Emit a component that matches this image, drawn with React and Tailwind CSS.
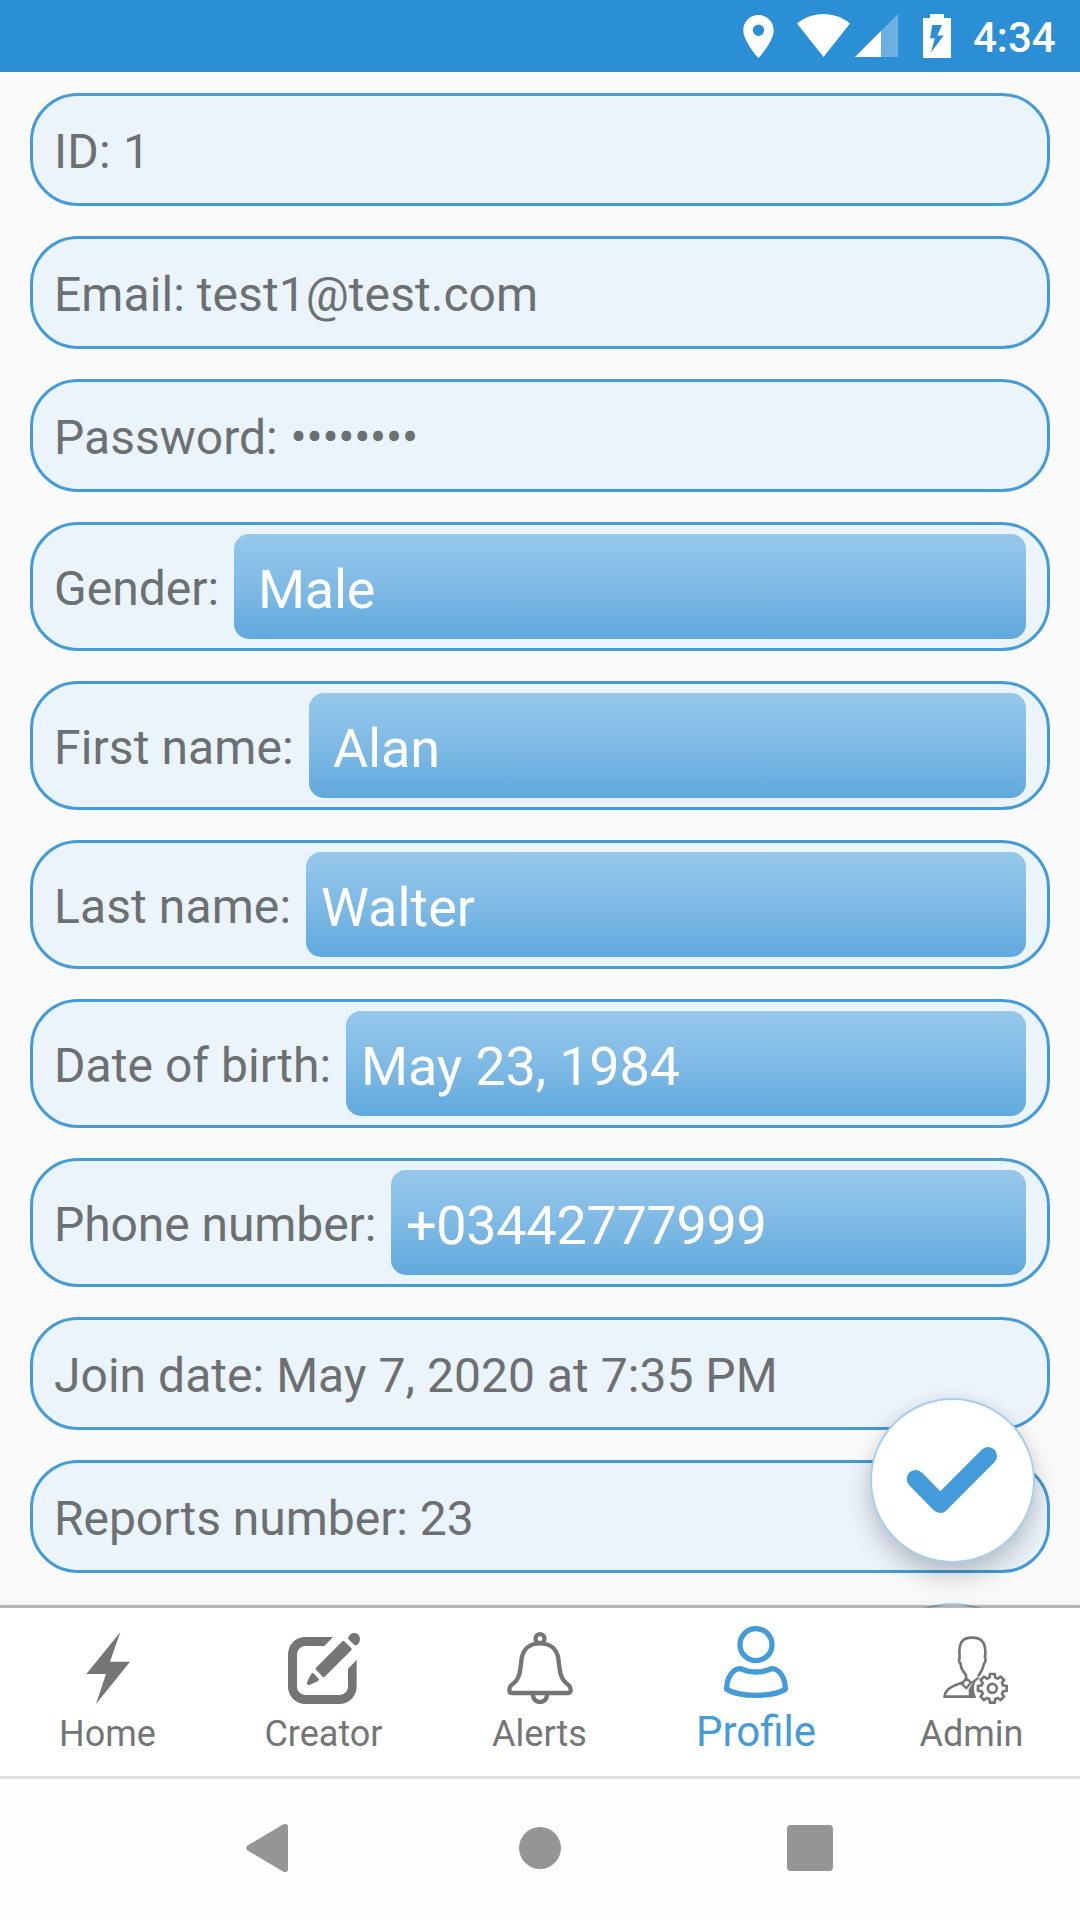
const ROWS = [
  { label: "ID: 1", tracking: "tracking-[0.2px]" },
  { label: "Email: test1@test.com", tracking: "tracking-[0.06px]" },
  { label: "Password: ", secret: "••••••••" },
  { label: "Gender:", value: "Male", labelWidth: "w-[165px]", indent: "pl-[24px]", valueTracking: "tracking-[-0.3px]" },
  { label: "First name:", value: "Alan", labelWidth: "w-[240px]", indent: "pl-[24px]", tracking: "tracking-[0.1px]", valueTracking: "tracking-[-0.2px]" },
  { label: "Last name:", value: "Walter", labelWidth: "w-[237px]", indent: "pl-[15px]", tracking: "tracking-[0.1px]" },
  { label: "Date of birth:", value: "May 23, 1984", labelWidth: "w-[277px]", indent: "pl-[15px]", tracking: "tracking-[0.05px]", valueTracking: "tracking-[-0.2px]" },
  { label: "Phone number:", value: "+03442777999", labelWidth: "w-[322px]", indent: "pl-[15px]", tracking: "tracking-[-0.08px]", valueTracking: "tracking-[-0.33px]" },
  { label: "Join date: May 7, 2020 at 7:35 PM", tracking: "tracking-[0.03px]" },
  { label: "Reports number: 23", tracking: "tracking-[-0.04px]" },
];

function StatusBar() {
  return (
    <header className="flex h-[72px] shrink-0 items-start bg-[#2b8fd5] pl-[743px] text-white">
      <svg className="mt-[15px] h-[43px] w-[31px]" viewBox="0 0 31 43" fill="currentColor">
        <path fillRule="evenodd" d="M15.500 0C7 0 .3 6.700.3 15.200c0 11.300 15.200 27.800 15.200 27.800s15.200-16.500 15.200-27.800C30.700 6.700 24 0 15.500 0zm0 20.900a5.700 5.700 0 1 1 0-11.400 5.700 5.700 0 0 1 0 11.400z" />
      </svg>
      <svg className="ml-[23px] mt-[14px] h-[43px] w-[53px]" viewBox="0 0 53 43" fill="currentColor">
        <path d="M0 9.500C7.500 3.500 16.500 0 26.500 0S45.500 3.500 53 9.500L26.500 43z" />
      </svg>
      <svg className="ml-[5px] mt-[14px] h-[43px] w-[43px]" viewBox="0 0 43 43" fill="currentColor">
        <path opacity=".3" d="M0 43L43 0V43z" />
        <path d="M0 43L26 17V43z" />
      </svg>
      <svg className="ml-[25px] mt-[14px] h-[44px] w-[28px]" viewBox="0 0 28 44" fill="currentColor">
        <path fillRule="evenodd" d="M7 0H21V4H28V44H0V4H7zM9.300 11L7 24.300h4.800L8 38.500 20.700 21.500H14.300L19 11z" />
      </svg>
      <span className="ml-[22px] mt-[13px] text-[42px] font-medium leading-[49px]">4:34</span>
    </header>
  );
}

function Row({ label, value, secret, labelWidth = "", indent = "", tracking = "", valueTracking = "" }) {
  return (
    <div
      className={
        "flex shrink-0 items-center rounded-[48px] border-[3px] border-[#439bda] bg-[#ebf3fb] px-[21px] " +
        (value ? "h-[129px]" : "h-[113px]")
      }
    >
      <span
        className={
          "shrink-0 whitespace-pre pt-[4px] text-[48px] leading-[56px] text-[#6d7072] " + tracking + " " + labelWidth
        }
      >
        {label}
        {secret && <span className="ml-px tracking-[-0.28px]">{secret}</span>}
      </span>
      {value && (
        <span
          className={
            "ml-[15px] flex h-[105px] flex-1 items-center rounded-[15px] bg-linear-to-b from-[#97c8eb] via-[#7fbae5] to-[#60a9de] pt-[7px] text-[54px] leading-[64px] text-white " +
            indent + " " + valueTracking
          }
        >
          {value}
        </span>
      )}
    </div>
  );
}

function HomeIcon() {
  return (
    <svg className="size-[72px]" viewBox="0 0 216 216" fill="currentColor">
      <path d="M145 0L114 89.500H174L72 216 102 126H43z" />
    </svg>
  );
}

function CreatorIcon() {
  return (
    <svg className="size-[72px]" viewBox="0 0 216 216" fill="currentColor">
      <path d="M135 15H52A52 52 0 0 0 0 67V164A52 52 0 0 0 52 216H154A52 52 0 0 0 206 164V84L180 110V164A25 25 0 0 1 155 189H52A25 25 0 0 1 27 164V67A25 25 0 0 1 52 42H109z" />
      <path d="M84 107L163 28Q166 25 169 28L190 49Q192 52 190 55L110 134Q107 137 104 134L84 113Q81 110 84 107z" />
      <path d="M75 122Q78 124 94 143Q92 147 64 159Q56 160 57 151Q68 124 75 122z" />
      <path d="M180 18C186 -3 216 -3 216 22C216 32 210 38 204 40Q200 41 197 37L180 20z" />
    </svg>
  );
}

function BellIcon() {
  return (
    <svg className="size-[72px]" viewBox="0 0 216 216" fill="none" stroke="currentColor" strokeWidth="13">
      <circle cx="108" cy="20" r="13.500" />
      <path d="M108 34C75 34 57 53 53 80C48 115 49 133 33 150C21 160 16 163 16 175Q16 183 24 183H192Q200 183 200 175C200 163 195 160 183 150C167 133 168 115 163 80C159 53 141 34 108 34z" />
      <path d="M87 186V189A21 21 0 0 0 129 189V186" />
    </svg>
  );
}

function ProfileIcon() {
  return (
    <svg className="size-[72px]" viewBox="0 0 216 216" fill="none" stroke="currentColor" strokeWidth="16" strokeLinejoin="round">
      <circle cx="108" cy="56" r="48" />
      <path d="M20 190C20 154 38 129 61 128C76 135 90 138 108 138C126 138 140 135 155 128C178 129 196 154 196 190C175 202 145 208 108 208C71 208 41 202 20 190z" />
    </svg>
  );
}

function AdminIcon() {
  return (
    <svg className="size-[72px]" viewBox="0 0 216 216" fill="none" stroke="currentColor" strokeWidth="8">
      <path d="M90 148V129C80 117 74 108 74 96Q69 92 69 82L71 78C67 35 76 17 108 17C140 17 152 35 147 78L149 84Q147 94 143 97C141 112 135 120 126 133" />
      <path d="M84 151C50 160 26 174 26 194H104" />
      <path d="M91 139L105 152 91 168 77 155z" strokeWidth="7" />
      <path d="M128 137L108 152" strokeWidth="7" />
      <path fill="currentColor" stroke="none" d="M116 144L98 172V198H121Q108 170 119 146z" />
      <g transform="translate(169 169)" strokeWidth="8">
        <circle r="13.500" strokeWidth="8" />
        <path d="M-7 -43H7L9 -32L16 -29L25 -35L35 -25L29 -16L32 -9L43 -7V7L32 9L29 16L35 25L25 35L16 29L9 32L7 43H-7L-9 32L-16 29L-25 35L-35 25L-29 16L-32 9L-43 7V-7L-32 -9L-29 -16L-35 -25L-25 -35L-16 -29L-9 -32z" />
      </g>
    </svg>
  );
}

const TABS = [
  { name: "Home", Icon: HomeIcon },
  { name: "Creator", Icon: CreatorIcon },
  { name: "Alerts", Icon: BellIcon },
  { name: "Profile", Icon: ProfileIcon, active: true },
  { name: "Admin", Icon: AdminIcon },
];

function TabBar() {
  return (
    <nav className="grid h-[171px] shrink-0 grid-cols-5 border-b-[3px] border-[#dedede] bg-white">
      {TABS.map(({ name, Icon, active }) => (
        <div
          key={name}
          className={"flex flex-col items-center " + (active ? "pt-[18px] text-[#439bda]" : "pt-[24px] text-[#757575]")}
        >
          <Icon />
          <span
            className={
              active ? "mt-[9px] text-[42px] leading-[49px]" : "mr-[1px] mt-[9px] text-[36px] leading-[42px]"
            }
          >
            {name}
          </span>
        </div>
      ))}
    </nav>
  );
}

function SystemNav() {
  return (
    <footer className="flex flex-1 items-center justify-between bg-[#fefefe] pb-[3px] pl-[246px] pr-[247px] text-[#959595]">
      <svg className="h-[48px] w-[42px]" viewBox="0 0 42 48" fill="currentColor">
        <path d="M37 .6Q42 -1.500 42 3V45Q42 49.500 37 47.400L1.500 26.500Q-1 24 1.500 21.500z" />
      </svg>
      <div className="ml-[5px] size-[42px] rounded-full bg-[#959595]" />
      <div className="size-[46px] rounded-[4px] bg-[#959595]" />
    </footer>
  );
}

export default function App() {
  return (
    <div className="flex h-[1920px] w-[1080px] flex-col overflow-hidden bg-[#fafafa] font-[Roboto,sans-serif]">
      <StatusBar />
      <main className="relative flex h-[1536px] shrink-0 flex-col gap-[30px] overflow-hidden px-[30px] pt-[21px]">
        {ROWS.map((row) => (
          <Row key={row.label} {...row} />
        ))}
        <div className="absolute left-[870px] top-[1531px] size-[165px] rounded-full border-2 border-[#a9d1f0] bg-white" />
        <button
          aria-label="Save"
          className="absolute left-[870px] top-[1326px] size-[165px] rounded-full border-2 border-[#a9cfee] bg-white shadow-[0_14px_26px_rgba(0,0,0,0.2),0_0_16px_rgba(0,0,0,0.05)]"
        >
          <svg className="size-full" viewBox="157 120 483 483" fill="none" stroke="#439bda" strokeWidth="54" strokeLinecap="round" strokeLinejoin="round">
            <path d="M288 357L361.500 432L505 288" />
          </svg>
        </button>
        <div className="absolute inset-x-0 bottom-0 h-[3px] bg-black/28 shadow-[0_0_8px_rgba(0,0,0,0.12)]" />
      </main>
      <TabBar />
      <SystemNav />
    </div>
  );
}
